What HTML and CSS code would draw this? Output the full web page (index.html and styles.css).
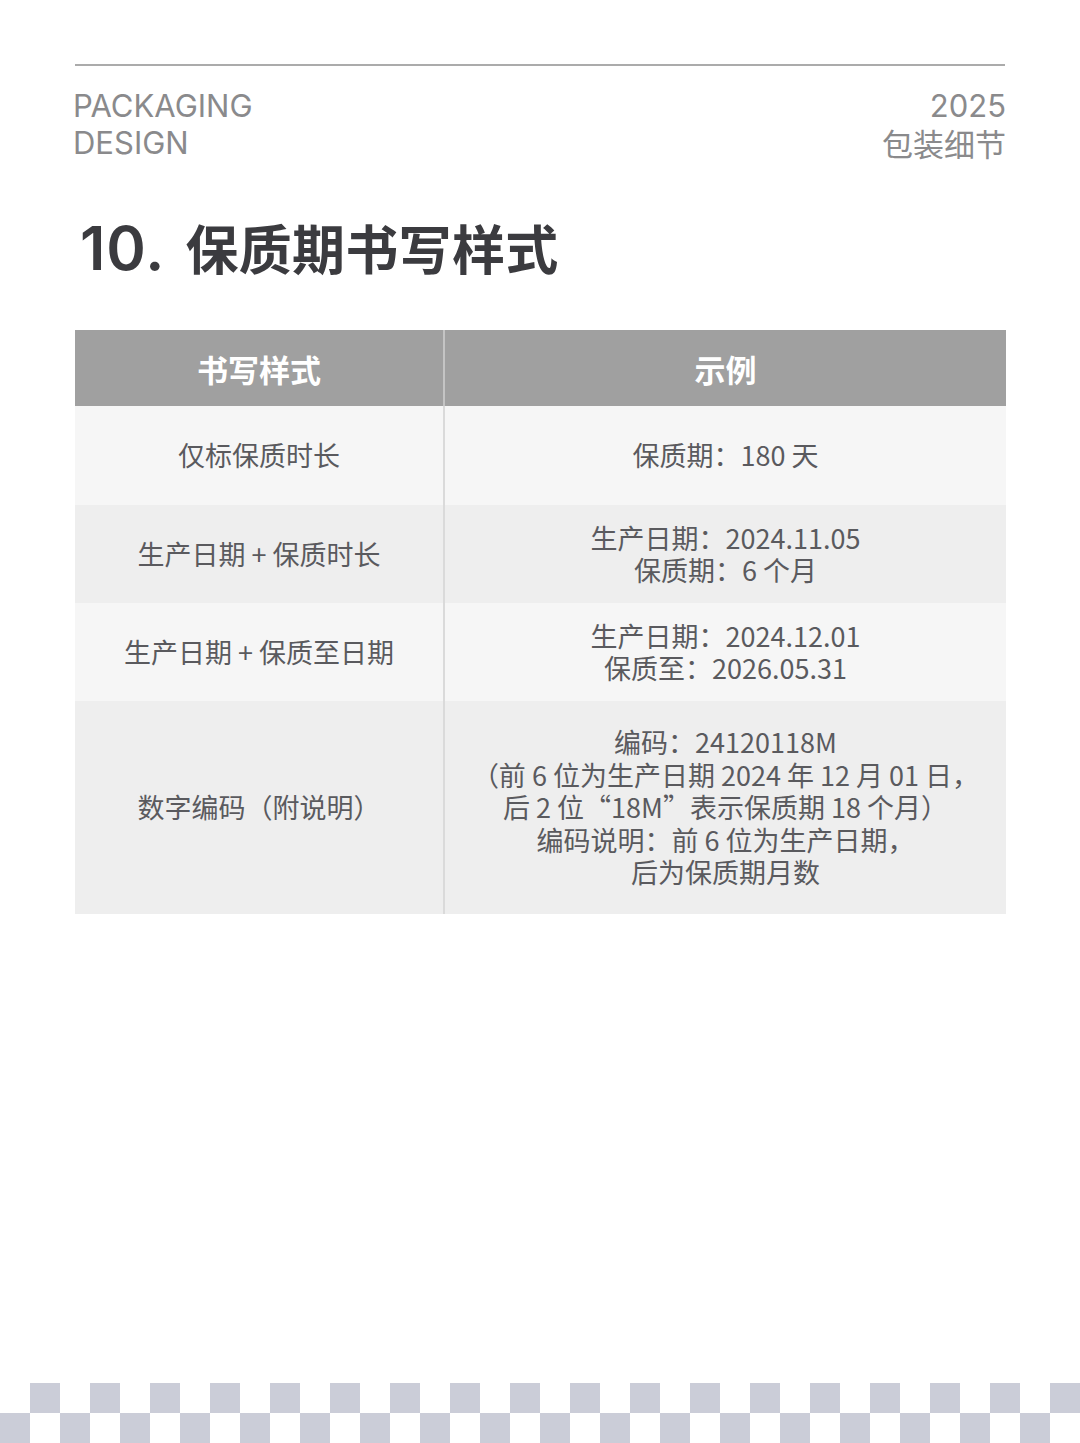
FILE: index.html
```html
<!DOCTYPE html>
<html lang="zh-CN">
<head>
<meta charset="utf-8">
<title>保质期书写样式</title>
<link rel="stylesheet" href="styles.css">
</head>
<body>
<div class="page">
  <header class="top">
    <div class="brand">PACKAGING<br>DESIGN</div>
    <div class="year">2025<br><span class="cjk">包装细节</span></div>
  </header>
  <h1 class="title"><span class="num">10.</span><span class="cn">保质期书写样式</span></h1>
  <div class="table">
    <div class="th">书写样式</div>
    <div class="th sep">示例</div>

    <div class="td odd r1">仅标保质时长</div>
    <div class="td odd sep r1">保质期：180 天</div>

    <div class="td even">生产日期 + 保质时长</div>
    <div class="td even sep">生产日期：2024.11.05<br>保质期：6 个月</div>

    <div class="td odd">生产日期 + 保质至日期</div>
    <div class="td odd sep">生产日期：2024.12.01<br>保质至：2026.05.31</div>

    <div class="td even r4">数字编码（附说明）</div>
    <div class="td even sep r4">编码：24120118M<br>（前 6 位为生产日期 2024 年 12 月 01 日，<br>后 2 位“18M”表示保质期 18 个月）<br>编码说明：前 6 位为生产日期，<br>后为保质期月数</div>
  </div>
  <div class="checker"></div>
</div>
</body>
</html>
```
FILE: styles.css
```css
html, body {
  margin: 0;
  padding: 0;
  background: #ffffff;
}
.page {
  width: 1080px;
  height: 1443px;
  display: flex;
  flex-direction: column;
  font-family: "Noto Sans CJK SC", sans-serif;
  overflow: hidden;
}
.top {
  margin: 64px 75px 0 75px;
  border-top: 2px solid #ababab;
  padding-top: 21px;
  display: flex;
  justify-content: space-between;
  color: #8a8a8c;
  font-family: "Inter", "Noto Sans CJK SC", sans-serif;
  font-size: 31px;
  line-height: 37px;
  font-weight: 400;
}
.brand {
  margin-left: -2px;
}
.year {
  text-align: right;
  margin-right: -1px;
}
.year .cjk {
  font-family: "Noto Sans CJK SC", sans-serif;
  font-size: 31px;
}
.title {
  margin: 44px 0 0 80px;
  font-family: "Noto Sans CJK SC", sans-serif;
  font-size: 53px;
  line-height: 80px;
  font-weight: 700;
  color: #3b3b3f;
  display: flex;
  align-items: baseline;
  gap: 20px;
}
.title .num {
  font-family: "Inter", sans-serif;
  font-size: 60px;
  font-weight: 600;
  letter-spacing: 1px;
}
.title .cn {
  letter-spacing: 0.3px;
}
.table {
  margin: 42px 74px 0 75px;
  display: grid;
  grid-template-columns: 368px 1fr;
}
.th {
  height: 76px;
  background: #a0a0a0;
  color: #ffffff;
  font-size: 31px;
  font-weight: 700;
  display: flex;
  align-items: center;
  justify-content: center;
}
.th.sep {
  border-left: 2px solid #c4c4c4;
}
.td {
  height: 98px;
  display: flex;
  align-items: center;
  justify-content: center;
  text-align: center;
  color: #5a5a5e;
  font-size: 27px;
  line-height: 32.5px;
}
.td.r1 {
  height: 99px;
}
.td.sep {
  border-left: 2px solid #dadada;
}
.td.odd {
  background: #f6f6f6;
}
.td.even {
  background: #eeeeee;
}
.td.r4 {
  height: 213px;
}
.checker {
  margin-top: auto;
  height: 60px;
  background: repeating-conic-gradient(#cbcdd8 0 25%, transparent 0 50%) 0 0 / 60px 60px;
}
```
